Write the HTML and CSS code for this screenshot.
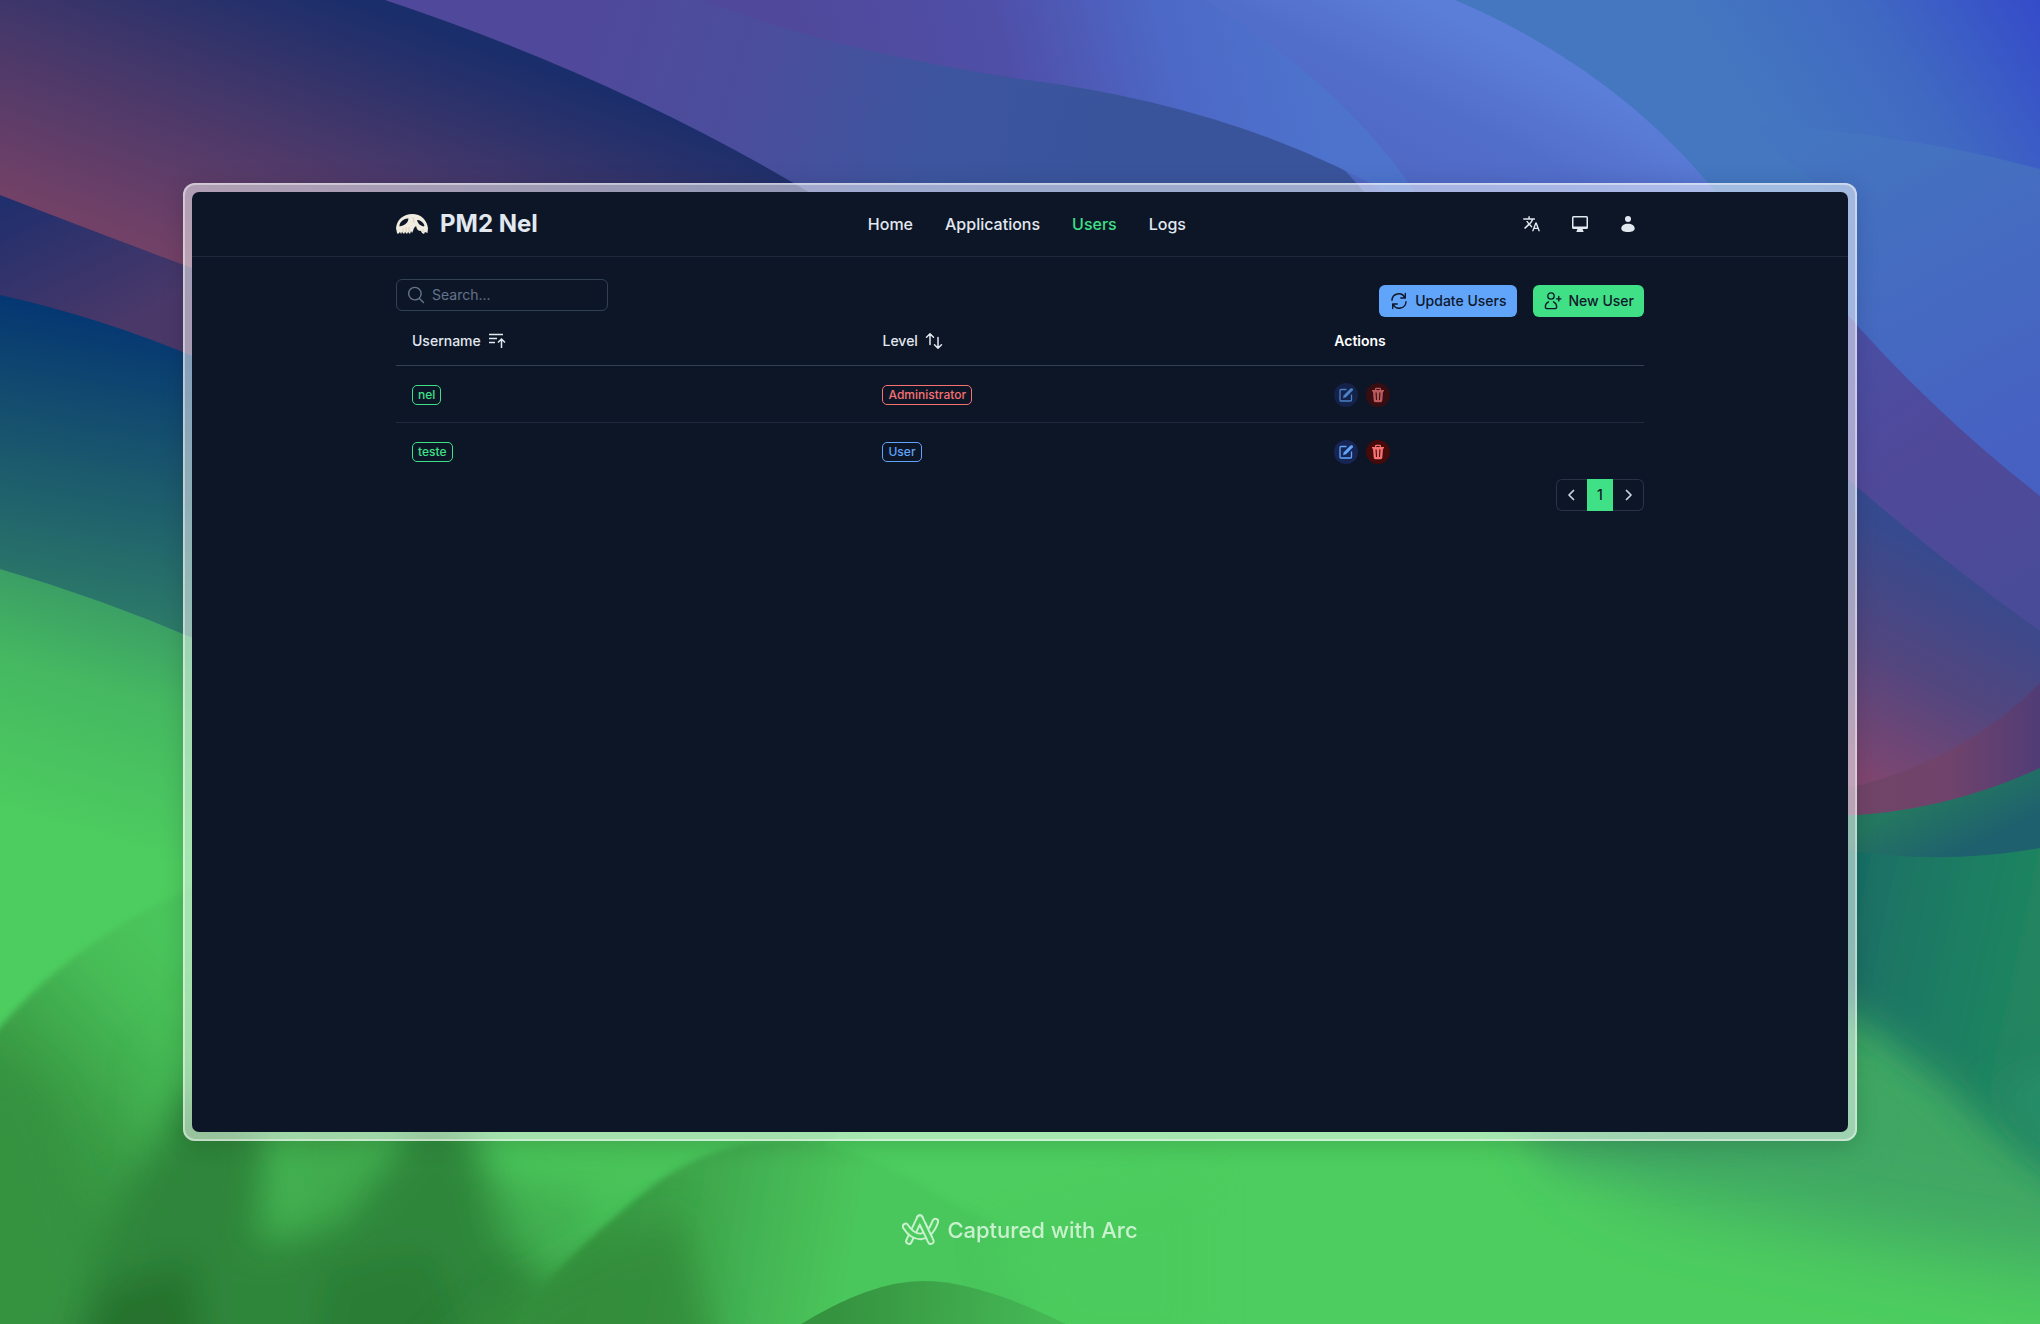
FILE: index.html
```html
<!DOCTYPE html>
<html lang="en">
<head>
<meta charset="utf-8">
<meta name="viewport" content="width=device-width, initial-scale=1">
<title>PM2 Nel - Users</title>
<link rel="stylesheet" href="styles.css">
</head>
<body>
<svg class="wallpaper" viewBox="0 0 2040 1324" preserveAspectRatio="none" aria-hidden="true">
  <defs>
    <linearGradient id="gNavy" gradientUnits="userSpaceOnUse" x1="0" y1="190" x2="100" y2="-90"><stop offset="0" stop-color="#724167"/><stop offset=".5" stop-color="#48386a"/><stop offset="1" stop-color="#1a2e6b"/></linearGradient>
    <linearGradient id="gBand" gradientUnits="userSpaceOnUse" x1="0" y1="205" x2="70" y2="350"><stop offset="0" stop-color="#202f6d"/><stop offset="1" stop-color="#4a3869"/></linearGradient>
    <linearGradient id="gTeal" gradientUnits="userSpaceOnUse" x1="70" y1="310" x2="20" y2="600"><stop offset="0" stop-color="#053772"/><stop offset=".5" stop-color="#1a576d"/><stop offset="1" stop-color="#2c7969"/></linearGradient>
    <linearGradient id="gGreen" gradientUnits="userSpaceOnUse" x1="120" y1="560" x2="40" y2="830"><stop offset="0" stop-color="#369267"/><stop offset=".45" stop-color="#45b861"/><stop offset="1" stop-color="#4dcd5f"/></linearGradient>
    <linearGradient id="gPurple" gradientUnits="userSpaceOnUse" x1="600" y1="0" x2="1100" y2="150"><stop offset="0" stop-color="#50499b"/><stop offset=".35" stop-color="#4a4e9c"/><stop offset=".7" stop-color="#3c559e"/><stop offset="1" stop-color="#3a549c"/></linearGradient>
    <linearGradient id="gRay" gradientUnits="userSpaceOnUse" x1="820" y1="110" x2="1290" y2="-10"><stop offset="0" stop-color="#50499b"/><stop offset=".4" stop-color="#4f4fa8"/><stop offset=".72" stop-color="#4d68c6"/><stop offset="1" stop-color="#4d73cd"/></linearGradient>
    <linearGradient id="gSky" gradientUnits="userSpaceOnUse" x1="1500" y1="40" x2="1420" y2="200"><stop offset="0" stop-color="#5b7ed8"/><stop offset=".5" stop-color="#526ecb"/><stop offset="1" stop-color="#4f68c4"/></linearGradient>
    <linearGradient id="gCorner" gradientUnits="userSpaceOnUse" x1="1780" y1="150" x2="2030" y2="-10"><stop offset="0" stop-color="#4477c0"/><stop offset=".5" stop-color="#4069c2"/><stop offset="1" stop-color="#354cc9"/></linearGradient>
    <linearGradient id="gBlue" gradientUnits="userSpaceOnUse" x1="1820" y1="130" x2="1990" y2="450"><stop offset="0" stop-color="#4475c0"/><stop offset="1" stop-color="#4661c2"/></linearGradient>
    <linearGradient id="gViolet" gradientUnits="userSpaceOnUse" x1="1860" y1="330" x2="2040" y2="600"><stop offset="0" stop-color="#4a4fa5"/><stop offset=".4" stop-color="#50499a"/><stop offset="1" stop-color="#494b98"/></linearGradient>
    <linearGradient id="gDusk" gradientUnits="userSpaceOnUse" x1="1960" y1="560" x2="1850" y2="770"><stop offset="0" stop-color="#364a8f"/><stop offset=".5" stop-color="#52467f"/><stop offset="1" stop-color="#7f4670"/></linearGradient>
    <linearGradient id="gRose" gradientUnits="userSpaceOnUse" x1="1860" y1="0" x2="2040" y2="0"><stop offset="0" stop-color="#714468"/><stop offset=".5" stop-color="#6f436b"/><stop offset="1" stop-color="#513c76"/></linearGradient>
    <linearGradient id="gFold" gradientUnits="userSpaceOnUse" x1="1940" y1="790" x2="1970" y2="850"><stop offset="0" stop-color="#247760"/><stop offset="1" stop-color="#1e606e"/></linearGradient>
    <linearGradient id="gDeep" gradientUnits="userSpaceOnUse" x1="1850" y1="900" x2="2040" y2="940"><stop offset="0" stop-color="#196f66"/><stop offset=".6" stop-color="#1e7e62"/><stop offset="1" stop-color="#208560"/></linearGradient>
    <linearGradient id="gHill" gradientUnits="userSpaceOnUse" x1="0" y1="1160" x2="200" y2="970"><stop offset="0" stop-color="#35913f"/><stop offset=".3" stop-color="#3a9c45"/><stop offset=".75" stop-color="#47bd57"/><stop offset="1" stop-color="#4ac55b"/></linearGradient>
    <linearGradient id="gHill2" gradientUnits="userSpaceOnUse" x1="600" y1="1210" x2="850" y2="1250"><stop offset="0" stop-color="#369640"/><stop offset=".5" stop-color="#41ad50"/><stop offset="1" stop-color="#4ac65b"/></linearGradient>
    <linearGradient id="gHill3" gradientUnits="userSpaceOnUse" x1="830" y1="1300" x2="1050" y2="1310"><stop offset="0" stop-color="#35923f"/><stop offset="1" stop-color="#45b855"/></linearGradient>
    <filter id="b3" filterUnits="userSpaceOnUse" x="-200" y="-200" width="2500" height="1800"><feGaussianBlur stdDeviation="3"/></filter>
    <filter id="b20" filterUnits="userSpaceOnUse" x="-200" y="-200" width="2500" height="1800"><feGaussianBlur stdDeviation="18"/></filter>
    <filter id="b40" filterUnits="userSpaceOnUse" x="-200" y="-200" width="2500" height="1800"><feGaussianBlur stdDeviation="38"/></filter>
  </defs>
  <rect width="2040" height="1324" fill="#4dcd5f"/>
  <path fill="#3fa763" filter="url(#b40)" d="M1540 1090L1860 980L2140 1090V1280Q1900 1250 1740 1210Q1580 1190 1540 1090Z"/>
  <path fill="#3da362" filter="url(#b20)" d="M1510 1100H1860V1150Q1700 1170 1550 1170Z" opacity=".6"/>
  <path fill="url(#gDeep)" filter="url(#b20)" d="M1760 780H2140V1220Q2010 1160 1950 1090Q1900 1050 1840 1010L1760 960Z"/>
  <path fill="#278e68" filter="url(#b20)" d="M2000 1090L2100 1050V1190Q2050 1170 2000 1090Z"/>
  <path fill="url(#gGreen)" d="M0 540H200V860H0Z"/>
  <path fill="url(#gTeal)" d="M0 290L200 350V641Q100 598 0 569Z"/>
  <path fill="url(#gBand)" d="M0 190L200 262V359Q100 317 0 295Z"/>
  <path fill="url(#gPurple)" d="M380 0H1300L1460 220H760Z"/>
  <path fill="url(#gCorner)" d="M1400 0H2040V300H1600Z"/>
  <path fill="url(#gSky)" d="M1190 0H1455Q1620 70 1722 200L1730 220H1390Z"/>
  <path fill="url(#gRay)" d="M700 0H1205Q1350 90 1420 200H1400Q1240 106 1020 79Q830 50 700 0Z"/>
  <path fill="url(#gNavy)" d="M0 0H385Q625 80 822 200L200 271Q90 230 0 195Z"/>
  <path fill="url(#gBlue)" d="M1755 125Q1900 132 2040 169V520L1840 340V200Q1780 160 1755 125Z"/>
  <path fill="url(#gViolet)" d="M1840 306Q1930 410 2040 496V650L1840 490Z"/>
  <path fill="url(#gFold)" d="M1840 780L2040 740V848Q1940 866 1840 849Z"/>
  <path fill="url(#gRose)" d="M1840 760L2040 660V768Q1945 812 1840 816Z"/>
  <path fill="url(#gDusk)" d="M1840 472Q1940 560 2040 631V683Q1960 764 1840 790Z"/>
  <path fill="url(#gHill)" filter="url(#b3)" d="M-20 1052Q60 945 200 884L840 1130L620 1354H-20Z"/>
  <g filter="url(#b20)">
    <path fill="#44b553" d="M150 1060L230 980V1080L140 1180Z" opacity=".7"/>
    <path fill="#36933f" d="M-40 1060Q20 1060 50 1110L120 1370H-40Z"/>
    <path fill="#2f853a" d="M190 1080L270 1130L240 1370H60L110 1220Z"/>
    <path fill="#40ab4e" d="M280 1100L400 1110L350 1200L290 1260Z"/>
    <path fill="#2f863a" d="M220 1260L340 1220L420 1110L470 1130L590 1380H180Z"/>
    <path fill="#49c359" d="M480 1100L860 1100L690 1160L600 1210L520 1180Z"/>
    <path fill="#3ea84c" d="M480 1170L600 1200L560 1270L500 1250Z" opacity=".7"/>
    <path fill="#246d2d" d="M100 1290L190 1260L210 1370H70Z" opacity=".8"/>
    <path fill="#2a7a35" d="M330 1270L430 1250L480 1370H310Z" opacity=".8"/>
  </g>
  <path fill="url(#gHill2)" filter="url(#b3)" d="M480 1354Q580 1240 660 1180Q720 1140 787 1140Q850 1142 930 1190Q990 1226 1100 1260L960 1360Z"/>
  <g filter="url(#b20)">
    <path fill="#318b3b" d="M590 1250L680 1215L720 1370H420L500 1300Z" opacity=".85"/>
    <path fill="#4ccb5d" d="M990 1240L1200 1180V1350H1060Z"/>
  </g>
  <path fill="url(#gHill3)" d="M798 1326Q870 1281 923 1281Q980 1281 1070 1326Z"/>
</svg>

<div class="page">
  <div class="frame">
    <div class="app">
      <header class="header">
        <div class="container header-row">
          <a class="brand" href="#">
            <svg class="skull" viewBox="0 0 32 21" aria-hidden="true">
              <path fill="#f1ece0" d="M1 19L0 14Q1 7 5 4Q10 0 16 0Q23 0 27 4Q31 8 32 14L31.500 19L29 18L28 20L26 19L25 17Q22 17 21 15L20 12L18 14L17 17L16 19L15 17L14 20L12 18L11 20L9 18L8 20L6 18L5 20L4 18L2 20Z"/>
              <path fill="#0d1527" d="M3.500 12.500Q3 8.500 8 5.500Q10.500 4 12.500 4.500Q12 9.500 7 11.500Q5 12 3.500 12.500ZM21 6Q26 6 28.500 11.500L27.500 12.500Q22 11 21 6Z"/>
              <path stroke="#c9bfac" stroke-width=".6" fill="none" d="M7 14V18M10 13V18M13 13V18M27 15V18M17 3L18 9"/>
            </svg>
            <span>PM2 Nel</span>
          </a>
          <nav class="nav">
            <a href="#">Home</a>
            <a href="#">Applications</a>
            <a class="active" href="#">Users</a>
            <a href="#">Logs</a>
          </nav>
          <div class="tools">
            <button type="button" aria-label="Language"><svg viewBox="1 1 22 22"><path fill="currentColor" d="m12 22l4.500-12h2L23 22h-2l-1.100-3h-4.800L14 22zm3.880-5h3.240l-1.620-4.330zM2.600 19L1 17.500l5.600-5.500Q5 10.200 3.900 8H6q.8 1.500 2.200 2.900Q10.500 8.500 11.500 6H0V4h7V1.500h2V4h7v2h-2.400q-1.200 3.800-4 6.400l2.900 2.900-.8 2L8.200 13.700z"/></svg></button>
            <button type="button" aria-label="Theme"><svg viewBox="0 0 16 16"><path fill="currentColor" fill-rule="evenodd" d="M1.500 0h13Q16 0 16 1.500v10q0 1.500-1.500 1.500H10.500l1 2.300v.7h-7v-.7l1-2.300H1.500Q0 13 0 11.500v-10Q0 0 1.500 0zM1.500 1.500v9h13v-9z"/></svg></button>
            <button type="button" aria-label="Account"><svg viewBox="0 0 16 16"><circle cx="8" cy="3" r="3" fill="currentColor"/><path fill="currentColor" d="M8 7.800c3.800 0 6.700 2 6.700 4.600 0 2.200-2.600 3.600-6.700 3.600s-6.700-1.400-6.700-3.600C1.300 9.800 4.200 7.800 8 7.800z"/></svg></button>
          </div>
        </div>
      </header>
      <main class="container main">
        <div class="toolbar">
          <label class="search">
            <svg viewBox="0 0 24 24" aria-hidden="true"><path fill="none" stroke="currentColor" stroke-width="1.700" stroke-linecap="round" d="m21 21-5.200-5.200m0 0A7.500 7.500 0 1 0 5.200 5.200a7.500 7.500 0 0 0 10.600 10.600z"/></svg>
            <input type="text" placeholder="Search..." aria-label="Search">
          </label>
          <div class="actions">
            <button class="btn blue" type="button"><svg viewBox="0 0 20 20" aria-hidden="true"><path fill="none" stroke="currentColor" stroke-width="1.400" stroke-linecap="round" stroke-linejoin="round" d="M16.300 2.500V7h-4.500M3.700 17.500V13h4.500M3 9.300A6.700 6.700 0 0 1 15.800 6.800M17 10.700A6.700 6.700 0 0 1 4.200 13.200"/></svg>Update Users</button>
            <button class="btn green" type="button"><svg viewBox="0 0 20 20" aria-hidden="true"><g fill="none" stroke="currentColor" stroke-width="1.300" stroke-linecap="round"><circle cx="8" cy="5" r="3.200"/><path d="M13.500 7.800h4.500M15.800 5.500v4.600M5.500 10.800C3.300 11.800 2.300 13.700 2.300 15.700c0 1.300 1 2 2.300 2h6.800c1.300 0 2.300-.7 2.300-2 0-2-1-3.900-3.200-4.900"/></g></svg>New User</button>
          </div>
        </div>
        <table class="users">
          <colgroup><col class="c-name"><col class="c-level"><col></colgroup>
          <thead>
            <tr>
              <th scope="col"><button class="sort" type="button">Username<svg viewBox="0 0 20 20" aria-hidden="true"><path fill="none" stroke="currentColor" stroke-width="1.500" d="M2 3.500h14M2 7.500h8M2 11.500h6M14.500 17V8M11 11.500L14.500 8l3.500 3.500"/></svg></button></th>
              <th scope="col"><button class="sort" type="button">Level<svg viewBox="0 0 20 20" aria-hidden="true"><path fill="none" stroke="currentColor" stroke-width="1.500" stroke-linecap="round" stroke-linejoin="round" d="M6 13.500V3M2.500 6.200L6 2.700l3.500 3.500M14 6.500V17M10.500 13.800L14 17.300l3.500-3.500"/></svg></button></th>
              <th scope="col">Actions</th>
            </tr>
          </thead>
          <tbody>
            <tr>
              <td><span class="badge b-green">nel</span></td>
              <td><span class="badge b-red">Administrator</span></td>
              <td><div class="row-actions">
                <button class="round edit" type="button" disabled aria-label="Edit nel"><svg viewBox="0 0 16 16"><path fill="none" stroke="currentColor" stroke-width="1.300" stroke-linejoin="round" d="M8.500 2.500H3Q2 2.500 2 3.500V13Q2 14 3 14h9.500q1 0 1-1V7.500"/><path fill="currentColor" d="M5 11.300l.8-3L12.500 1.500Q13.500.8 14.600 1.500 15.500 2.500 14.700 3.500L8 10.300z"/></svg></button>
                <button class="round trash" type="button" disabled aria-label="Delete nel"><svg viewBox="0 0 16 16"><path fill="currentColor" fill-rule="evenodd" d="M5 3V2Q5 .8 6.200.8H9.800Q11 .8 11 2V3h3v1.500h-1L12.300 13.500Q12.200 15.200 10.700 15.200H5.300Q3.800 15.200 3.700 13.500L3 4.500H2V3zM6.300 3h3.400V2H6.300zM5.500 5.500L6 13h1L6.700 5.500zM9.300 5.500L9 13h1l.5-7.500z"/></svg></button>
              </div></td>
            </tr>
            <tr>
              <td><span class="badge b-green">teste</span></td>
              <td><span class="badge b-blue">User</span></td>
              <td><div class="row-actions">
                <button class="round edit" type="button" aria-label="Edit teste"><svg viewBox="0 0 16 16"><path fill="none" stroke="currentColor" stroke-width="1.300" stroke-linejoin="round" d="M8.500 2.500H3Q2 2.500 2 3.500V13Q2 14 3 14h9.500q1 0 1-1V7.500"/><path fill="currentColor" d="M5 11.300l.8-3L12.500 1.500Q13.500.8 14.600 1.500 15.500 2.500 14.700 3.500L8 10.300z"/></svg></button>
                <button class="round trash" type="button" aria-label="Delete teste"><svg viewBox="0 0 16 16"><path fill="currentColor" fill-rule="evenodd" d="M5 3V2Q5 .8 6.200.8H9.800Q11 .8 11 2V3h3v1.500h-1L12.300 13.500Q12.200 15.200 10.700 15.200H5.300Q3.800 15.200 3.700 13.500L3 4.500H2V3zM6.300 3h3.400V2H6.300zM5.500 5.500L6 13h1L6.700 5.500zM9.300 5.500L9 13h1l.5-7.500z"/></svg></button>
              </div></td>
            </tr>
          </tbody>
        </table>
        <nav class="pager" aria-label="Pagination">
          <button type="button" class="prev" aria-label="Previous"><svg viewBox="0 0 20 20"><path fill="none" stroke="currentColor" stroke-width="1.700" stroke-linecap="round" stroke-linejoin="round" d="M11.500 5.500L7 10l4.500 4.500"/></svg></button>
          <button type="button" class="current" aria-current="page">1</button>
          <button type="button" class="next" aria-label="Next"><svg viewBox="0 0 20 20"><path fill="none" stroke="currentColor" stroke-width="1.700" stroke-linecap="round" stroke-linejoin="round" d="M8.500 5.500l4.500 4.500L8.500 14.500"/></svg></button>
        </nav>
      </main>
    </div>
  </div>
  <footer class="caption">
    <svg viewBox="0 0 112 92" aria-hidden="true">
      <g fill="none" stroke-linecap="round" stroke-linejoin="round">
        <path stroke="#c9f1ce" stroke-width="23" d="M21 81L54 12"/>
        <path stroke="#4ccb5e" stroke-width="11" d="M21 81L54 12"/>
        <path stroke="#c9f1ce" stroke-width="23" d="M54 12L87 81"/>
        <path stroke="#4ccb5e" stroke-width="11" d="M47 27L54 12L87 81"/>
        <path stroke="#c9f1ce" stroke-width="23" d="M11 37Q30 67 56 67Q86 64 101 22"/>
        <path stroke="#4ccb5e" stroke-width="11" d="M11 37Q30 67 56 67Q86 64 101 22"/>
        <path stroke="#c9f1ce" stroke-width="23" stroke-linecap="butt" d="M62 29L83 72"/>
        <path stroke="#4ccb5e" stroke-width="11" d="M58 20L87 81"/>
      </g>
    </svg>
    <span>Captured with Arc</span>
  </footer>
</div>
</body>
</html>
```
FILE: styles.css
```css
* { box-sizing: border-box; }

body {
  margin: 0;
  background: #4dcd5f;
  color: #e2e8f0;
  font: 14px/20px Inter, "Liberation Sans", sans-serif;
}

button, input { font: inherit; color: inherit; }

button {
  display: inline-flex;
  align-items: center;
  justify-content: center;
  margin: 0;
  padding: 0;
  border: 0;
  background: none;
}

a { color: inherit; text-decoration: none; }
svg { display: block; flex: none; }

.wallpaper {
  position: absolute;
  inset: 0;
  z-index: -1;
  width: 100%;
  height: 100%;
}

.page {
  display: flex;
  flex-direction: column;
  min-height: 100vh;
  padding: 183px 183px 0;
}

.frame {
  display: flex;
  flex: 1;
  padding: 9px;
  border-radius: 12px;
  background: rgba(255, 255, 255, .5);
  box-shadow: inset 0 0 0 1px rgba(255, 255, 255, .1), inset 0 0 0 2px rgba(255, 255, 255, .4), 0 4px 24px rgba(0, 0, 0, .14);
}

.app {
  flex: 1;
  border-radius: 7px;
  background: #0d1627;
}

.container {
  max-width: 1280px;
  margin: 0 auto;
  padding: 0 16px;
}

.header { border-bottom: 1px solid #1e293b; }

.header-row {
  display: flex;
  align-items: center;
  justify-content: space-between;
  height: 64px;
}

.brand {
  display: flex;
  align-items: center;
  gap: 12px;
  font-size: 24px;
  line-height: 32px;
  font-weight: 700;
}

.skull { width: 32px; height: 21px; }

.nav {
  display: flex;
  gap: 32px;
  font-size: 16px;
  line-height: 24px;
  font-weight: 500;
}

.nav .active { color: #3fe086; }

.tools { display: flex; gap: 16px; }
.tools button { width: 32px; height: 32px; }
.tools svg { width: 16px; height: 16px; overflow: visible; }

.main { padding-top: 22px; }

.toolbar {
  display: flex;
  align-items: flex-start;
  justify-content: space-between;
}

.search {
  display: flex;
  align-items: center;
  gap: 6px;
  width: 212px;
  height: 32px;
  padding: 0 9px;
  border: 1px solid #334155;
  border-radius: 6px;
  color: #64748b;
}

.search svg { width: 20px; height: 20px; }

.search input {
  flex: 1;
  min-width: 0;
  padding: 0;
  border: 0;
  outline: 0;
  background: none;
}

.search input::placeholder { color: #64748b; opacity: 1; }

.actions { display: flex; gap: 16px; padding-top: 6px; }

.btn {
  gap: 6px;
  height: 32px;
  padding: 0 10px;
  border-radius: 6px;
  color: #0f172a;
  font-weight: 500;
}

.btn svg, .sort svg { width: 20px; height: 20px; }
.blue { background: #60a5fa; }
.green { background: #3fe086; }

.users {
  width: 100%;
  border-collapse: collapse;
  table-layout: fixed;
}

.c-name { width: 37.7%; }
.c-level { width: 36.2%; }

th {
  height: 48px;
  padding: 0 16px;
  color: #fff;
  font-weight: 600;
  text-align: left;
}

.sort {
  gap: 6px;
  vertical-align: middle;
  color: #e2e8f0;
  font-weight: 500;
}

td { height: 57px; padding: 2px 16px 0; }
thead tr { border-bottom: 1px solid #334155; }
tbody tr + tr { border-top: 1px solid #1e293b; }

.badge {
  display: inline-flex;
  align-items: center;
  height: 20px;
  padding: 0 5px;
  border: 1px solid;
  border-radius: 5px;
  font-size: 12px;
  line-height: 16px;
  font-weight: 500;
  vertical-align: middle;
}

.b-green { color: #3fe086; }
.b-red { color: #f87171; }
.b-blue { color: #60a5fa; }

.row-actions { display: flex; gap: 8px; }

.round { width: 24px; height: 24px; border-radius: 50%; }
.round svg { width: 16px; height: 16px; }
.round:disabled { opacity: .75; }
.edit { background: #172554; color: #60a5fa; }
.trash { background: #450a0a; color: #f87171; }

.pager { display: flex; justify-content: flex-end; }

.pager button { width: 31px; height: 32px; border: 1px solid #273347; color: #cbd5e1; }
.pager svg { width: 20px; height: 20px; }
.pager .prev { border-right: 0; border-radius: 6px 0 0 6px; }
.pager .next { border-left: 0; border-radius: 0 6px 6px 0; }

.pager .current {
  width: 26px;
  border: 0;
  background: #3fe086;
  color: #0f172a;
  font-weight: 500;
}

.caption {
  display: flex;
  align-items: center;
  justify-content: center;
  gap: 8px;
  height: 183px;
  padding-bottom: 6px;
  color: #c9f1ce;
  font-size: 22px;
  line-height: 28px;
  font-weight: 500;
}

.caption svg { width: 37px; height: 31px; }
```
